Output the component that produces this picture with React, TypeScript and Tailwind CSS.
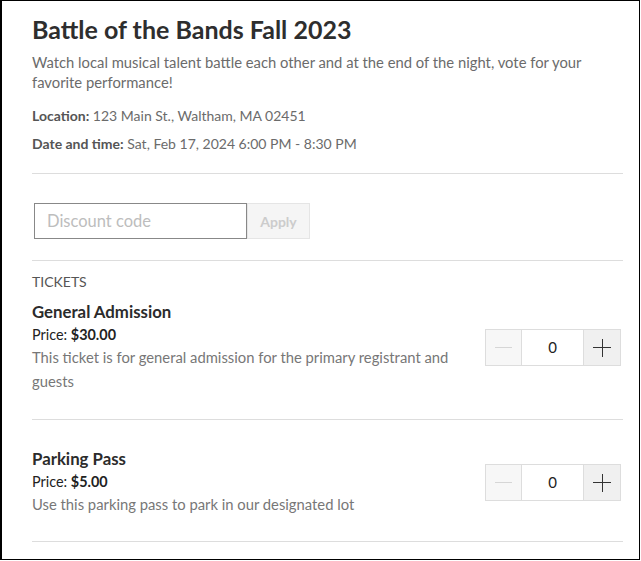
import React, { useState } from 'react';

type Ticket = {
  id: string;
  name: string;
  price: string;
  description: string;
};

const tickets: Ticket[] = [
  {
    id: 'ga',
    name: 'General Admission',
    price: '$30.00',
    description: 'This ticket is for general admission for the primary registrant and guests',
  },
  {
    id: 'parking',
    name: 'Parking Pass',
    price: '$5.00',
    description: 'Use this parking pass to park in our designated lot',
  },
];

function Stepper({ value, onChange }: { value: number; onChange: (v: number) => void }) {
  return (
    <div className="flex h-[37px] border border-[#dddddd]">
      <button
        disabled={value === 0}
        onClick={() => onChange(Math.max(0, value - 1))}
        className="flex w-[36px] items-center justify-center bg-[#f7f7f7] border-r border-[#dddddd]"
      >
        <span className="block h-px w-[17px] bg-[#d6d6d6]" />
      </button>
      <div className="flex w-[61px] items-center justify-center text-[15px] text-[#222]">{value}</div>
      <button
        onClick={() => onChange(value + 1)}
        className="relative flex w-[37px] items-center justify-center bg-[#f0f0f0] border-l border-[#dddddd]"
      >
        <span className="absolute h-px w-[18px] bg-[#333]" />
        <span className="absolute h-[18px] w-px bg-[#333]" />
      </button>
    </div>
  );
}

export default function App() {
  const [counts, setCounts] = useState<Record<string, number>>({ ga: 0, parking: 0 });
  const [code, setCode] = useState('');

  return (
    <div
      className="w-[640px] h-[560px] overflow-hidden border border-l-2 border-black bg-white pl-[30px] pr-4 pt-[12px]"
      style={{ fontFamily: 'Lato, "Noto Sans", sans-serif' }}
    >
      <h1 className="text-[25px] font-bold leading-[32px] text-[#2e2e2e]">Battle of the Bands Fall 2023</h1>
      <p className="mt-[7px] text-[14.8px] leading-[20px] text-[#6b6b6b]">
        Watch local musical talent battle each other and at the end of the night, vote for your favorite performance!
      </p>
      <p className="mt-[14px] text-[14px] leading-[20px] text-[#6b6b6b]">
        <span className="font-bold text-[#555]">Location:</span> 123 Main St., Waltham, MA 02451
      </p>
      <p className="mt-[8px] text-[14px] leading-[20px] text-[#6b6b6b]">
        <span className="font-bold text-[#555]">Date and time:</span> Sat, Feb 17, 2024 6:00 PM - 8:30 PM
      </p>

      <div className="mt-[19px] border-t border-[#dddddd]" />

      <div className="mt-[29px] flex pl-[2px]">
        <input
          value={code}
          onChange={(e) => setCode(e.target.value)}
          placeholder="Discount code"
          className="h-[36px] w-[213px] border border-[#888] px-[12px] text-[16.5px] text-[#333] outline-none placeholder:text-[#bdbdbd]"
        />
        <button
          disabled={!code}
          className="h-[36px] w-[63px] border border-[#e5e5e5] bg-[#f5f5f5] text-[14px] font-bold text-[#cccccc]"
        >
          Apply
        </button>
      </div>

      <div className="mt-[21px] border-t border-[#dddddd]" />

      <div className="mt-[11px] text-[14px] leading-[20px] text-[#555] uppercase">Tickets</div>

      {tickets.map((t, i) => (
        <div
          key={t.id}
          className={`flex items-center justify-between border-b border-[#dddddd] ${
            i === 0 ? 'pt-[10px] pb-[26px]' : 'pt-[29px] pb-[25px]'
          }`}
        >
          <div className="w-[432px]">
            <div className="text-[16.8px] font-bold leading-[20px] text-[#2b2b2b]">{t.name}</div>
            <div className="mt-[3px] text-[14.4px] leading-[20px] text-[#222]">
              Price: <span className="font-bold">{t.price}</span>
            </div>
            <div className="text-[14.8px] leading-[24px] text-[#777]">{t.description}</div>
          </div>
          <div className="mr-[2px]">
            <Stepper
              value={counts[t.id]}
              onChange={(v) => setCounts((c) => ({ ...c, [t.id]: v }))}
            />
          </div>
        </div>
      ))}
    </div>
  );
}
